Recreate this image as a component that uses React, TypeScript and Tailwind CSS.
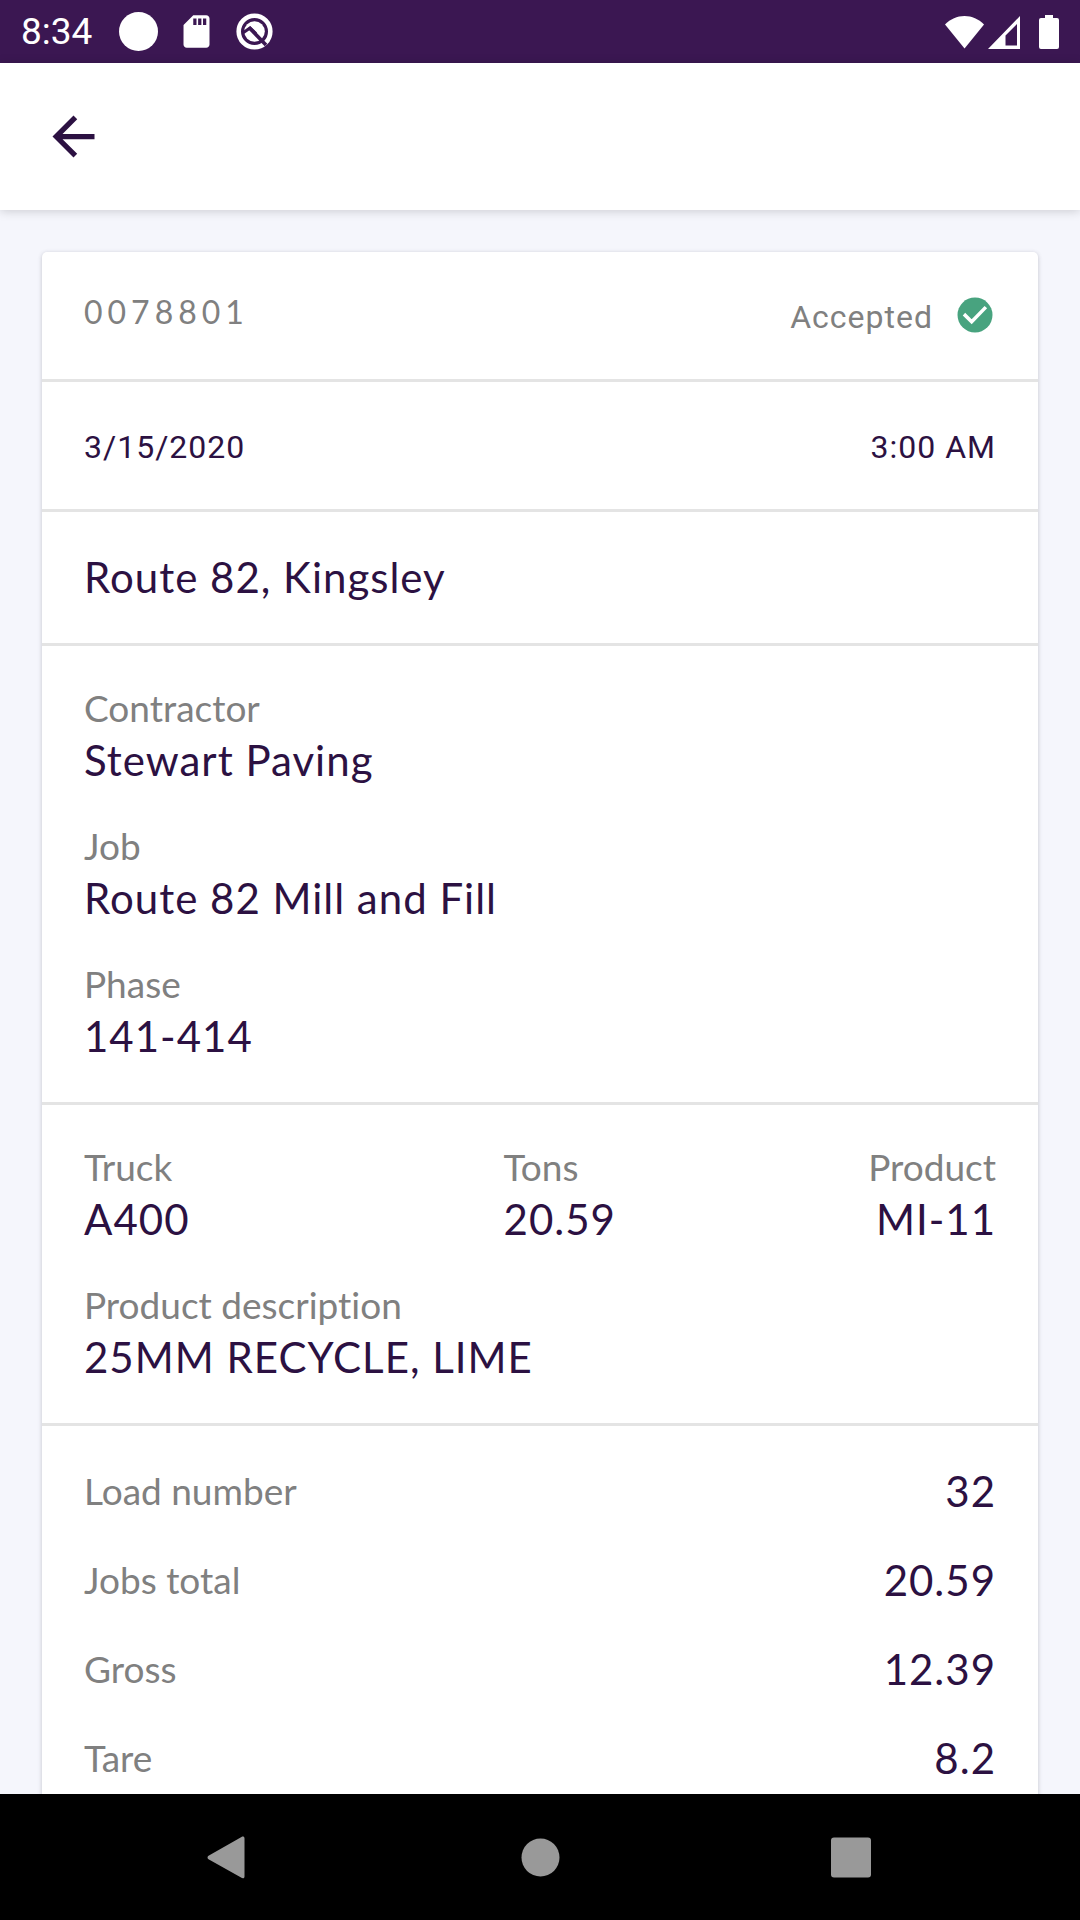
import type { ReactNode } from 'react';
import clsx from 'clsx';

interface FieldProps {
  label: string;
  value: string;
  alignRight?: boolean;
}

const totals = [
  { label: 'Load number', value: '32' },
  { label: 'Jobs total', value: '20.59' },
  { label: 'Gross', value: '12.39' },
  { label: 'Tare', value: '8.2' },
];

function StatusBar() {
  return (
    <div className="flex h-[63px] shrink-0 items-center justify-between bg-[#3b1752] px-[21px] text-white">
      <div className="flex items-center gap-[19px]">
        <span className="mr-2 font-['Roboto'] text-[37px] leading-[63px]">8:34</span>
        <svg className="size-[39px]" viewBox="0 0 39 39" fill="currentColor">
          <circle cx="19.5" cy="19.5" r="19.5" />
        </svg>
        <svg className="size-[39px]" viewBox="0 0 24 24" fill="currentColor">
          <path d="M18 2h-8L4.02 8 4 20c0 1.1.9 2 2 2h12c1.1 0 2-.9 2-2V4c0-1.1-.9-2-2-2zm-6 6h-2V4h2v4zm3 0h-2V4h2v4zm3 0h-2V4h2v4z" />
        </svg>
        <svg className="size-[39px]" viewBox="0 0 39 39" fill="none">
          <circle cx="19.5" cy="19.5" r="15.8" stroke="currentColor" strokeWidth="4.6" />
          <circle cx="19.5" cy="19.5" r="10.3" fill="currentColor" />
          <path d="M8.500 20.500l6.500-4.500 6 5.500" stroke="#3b1752" strokeWidth="3" />
          <path d="M14 15.500L31 33" stroke="#3b1752" strokeWidth="3.600" />
        </svg>
      </div>
      <div className="flex items-center">
        <svg className="h-[34px] w-[39px]" viewBox="0 0 39 34" fill="currentColor">
          <path d="M19.5 33.5L0 9.5C5.500 4 12 1 19.500 1S33.500 4 39 9.500z" />
        </svg>
        <svg className="ml-1 h-[34px] w-8" viewBox="0 0 32 34" fill="currentColor" fillRule="evenodd">
          <path d="M32 1v33H0zM29 9L17.500 20.500V30.500H29z" />
        </svg>
        <svg className="ml-[19px] h-[34px] w-5" viewBox="0 0 20 34" fill="currentColor">
          <path d="M6 0h8v3h4a2 2 0 0 1 2 2v27a2 2 0 0 1-2 2H2a2 2 0 0 1-2-2V5a2 2 0 0 1 2-2h4z" />
        </svg>
      </div>
    </div>
  );
}

function Header() {
  return (
    <header className="relative z-10 flex h-[147px] shrink-0 items-center bg-white px-[42px] shadow-[0_1px_10px_rgba(0,0,0,0.18)]">
      <button type="button" aria-label="Back" className="text-[#2c1142]">
        <svg className="size-[63px]" viewBox="0 0 24 24" fill="currentColor">
          <path d="M20 11H7.830l5.590-5.590L12 4l-8 8 8 8 1.410-1.410L7.830 13H20v-2z" />
        </svg>
      </button>
    </header>
  );
}

function Section({ className, children }: { className: string; children: ReactNode }) {
  return (
    <section className={clsx('border-[#e4e4e4] px-[42px] not-last:border-b-3', className)}>
      {children}
    </section>
  );
}

function Field({ label, value, alignRight }: FieldProps) {
  return (
    <div className={clsx(alignRight && 'text-right')}>
      <dt className="text-[37px] leading-[48px] text-[#808080]">{label}</dt>
      <dd className="text-[42px] leading-[56px] tracking-[1px]">{value}</dd>
    </div>
  );
}

function NavBar() {
  return (
    <nav className="flex h-[126px] shrink-0 items-center justify-center bg-black text-[#999999]">
      <button type="button" aria-label="Back" className="flex w-[310px] justify-center">
        <svg className="size-[63px]" viewBox="0 0 63 63" fill="currentColor">
          <path d="M42.500 11c1.300-1 3-.4 3 1.400v38c0 1.800-1.700 2.400-3 1.400L9.500 33.300c-1.300-1-1.300-2.600 0-3.600z" />
        </svg>
      </button>
      <button type="button" aria-label="Home" className="flex w-[310px] justify-center">
        <svg className="size-[63px]" viewBox="0 0 63 63" fill="currentColor">
          <circle cx="31.500" cy="31.500" r="19" />
        </svg>
      </button>
      <button type="button" aria-label="Recent apps" className="flex w-[310px] justify-center">
        <svg className="size-[63px]" viewBox="0 0 63 63" fill="currentColor">
          <rect x="12" y="11.500" width="40" height="40" rx="3" />
        </svg>
      </button>
    </nav>
  );
}

export default function App() {
  return (
    <div className="flex h-screen flex-col bg-[#f5f6fc] font-['Lato',sans-serif] text-[#2c1142] antialiased [font-variant-ligatures:none]">
      <StatusBar />
      <Header />

      <main className="min-h-0 flex-1 overflow-y-auto px-[42px] pt-[42px] [scrollbar-width:none]">
        <article className="rounded-[5px] bg-white shadow-[0_1px_4px_rgba(60,60,80,0.28)]">
          {/* Ticket number and status */}
          <Section className="flex items-start justify-between pt-[42px] pb-[39px] text-[32px] text-[#808080]">
            <span className="leading-[36px] tracking-[5px]">0078801</span>
            <div className="flex items-start gap-[21px] font-['Roboto']">
              <span className="leading-[46px] tracking-[1px]">Accepted</span>
              <svg className="size-[42px]" viewBox="0 0 24 24">
                <circle cx="12" cy="12" r="10" fill="#48a37f" />
                <path d="M5.700 11.500l4.400 4.300 8.100-8.300" fill="none" stroke="white" strokeWidth="2" />
              </svg>
            </div>
          </Section>

          <Section className="flex justify-between pt-[42px] pb-[39px] font-['Roboto'] text-[32px] leading-[46px] tracking-[1px]">
            <time>3/15/2020</time>
            <time>3:00 AM</time>
          </Section>

          <Section className="pt-[37px] pb-[38px]">
            <h1 className="text-[42px] leading-[56px] tracking-[1px]">Route 82, Kingsley</h1>
          </Section>

          <Section className="py-[38px]">
            <dl className="flex flex-col gap-[34px]">
              <Field label="Contractor" value="Stewart Paving" />
              <Field label="Job" value="Route 82 Mill and Fill" />
              <Field label="Phase" value="141-414" />
            </dl>
          </Section>

          {/* Load details */}
          <Section className="py-[38px]">
            <dl className="grid grid-cols-[46%_1fr_auto] gap-y-[34px]">
              <Field label="Truck" value="A400" />
              <Field label="Tons" value="20.59" />
              <Field label="Product" value="MI-11" alignRight />
              <div className="col-span-3">
                <Field label="Product description" value="25MM RECYCLE, LIME" />
              </div>
            </dl>
          </Section>

          <Section className="py-[37px]">
            <dl className="flex flex-col gap-[33px]">
              {totals.map((row) => (
                <div key={row.label} className="flex items-center justify-between">
                  <dt className="text-[37px] leading-[48px] text-[#808080]">{row.label}</dt>
                  <dd className="text-[42px] leading-[56px] tracking-[1px]">{row.value}</dd>
                </div>
              ))}
            </dl>
          </Section>
        </article>
      </main>

      <NavBar />
    </div>
  );
}
